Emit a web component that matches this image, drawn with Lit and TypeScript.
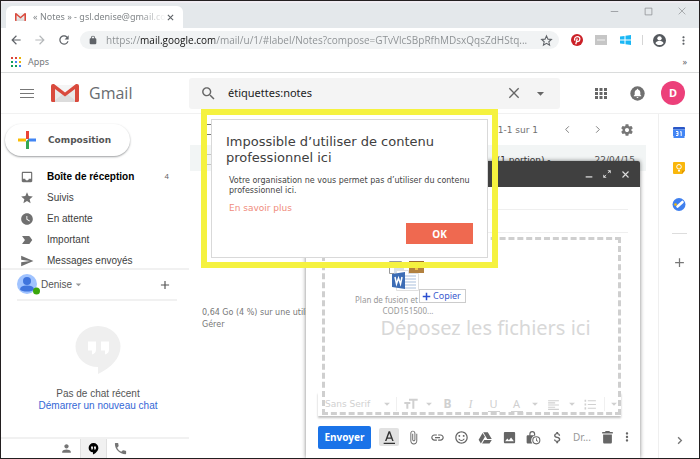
import { LitElement, html, css, svg } from "lit";
import { customElement } from "lit/decorators.js";

const icon = (body: unknown, size = 14, box = "0 0 24 24") =>
  html`<svg class="ic" width=${size} height=${size} viewBox=${box} fill="currentColor" aria-hidden="true">${body}</svg>`;
const p = (d: string, fill = "currentColor") => svg`<path d=${d} fill=${fill}></path>`;
const line = (d: string, w = 2) =>
  svg`<path d=${d} fill="none" stroke="currentColor" stroke-width=${w}></path>`;

const CARET = p("M7 10l5 5 5-5z");
const PLUS = p("M19 13h-6v6h-2v-6H5v-2h6V5h2v6h6v2z");
const DOTS = p("M12 8c1.1 0 2-.9 2-2s-.9-2-2-2-2 .9-2 2 .9 2 2 2zm0 2c-1.1 0-2 .9-2 2s.9 2 2 2 2-.9 2-2-.9-2-2-2zm0 6c-1.1 0-2 .9-2 2s.9 2 2 2 2-.9 2-2-.9-2-2-2z");
const PERSON = p("M12 12c2.21 0 4-1.79 4-4s-1.79-4-4-4-4 1.79-4 4 1.79 4 4 4zm0 2c-2.67 0-8 1.34-8 4v2h16v-2c0-2.66-5.33-4-8-4z");
const CLOSE = line("M5 5L19 19M19 5L5 19", 2);
const INBOX = p("M19 3H5c-1.1 0-2 .9-2 2v14c0 1.1.9 2 2 2h14c1.1 0 2-.9 2-2V5c0-1.1-.9-2-2-2zm0 12h-4c0 1.66-1.35 3-3 3s-3-1.34-3-3H5V5h14v10z");
const STAR = p("M12 17.27L18.18 21l-1.64-7.03L22 9.24l-7.19-.61L12 2 9.19 8.63 2 9.24l5.46 4.73L5.82 21z");
const CLOCK = p("M12 2C6.5 2 2 6.5 2 12s4.500 10 10 10 10-4.500 10-10S17.500 2 12 2zm4.200 14.200L11 13V7h1.500v5.200l4.500 2.700-.8 1.300z");
const LABEL = p("M3.500 19h11.500c.7 0 1.300-.3 1.700-.9L21 12l-4.300-6.100c-.4-.6-1-.9-1.700-.9H3.500l5 7z");
const SEND = p("M2 21l21-9L2 3v7l15 2-15 2z");

const gmailMark = (w: number, h: number) => html`
  <svg width=${w} height=${h} viewBox="0 0 28 18" preserveAspectRatio="none" aria-hidden="true">
    <path d="M2 1h24v17H2z" fill="#e9e9e9"></path>
    <path d="M2 18L14 8l12 10z" fill="#dcdcdc"></path>
    <path d="M3 1h22L14 10z" fill="#f5f5f5"></path>
    <path d="M0 2Q0 0 2 0h1l11 8.500L25 0h1q2 0 2 2v14.500q0 1.500-1.500 1.500H24V5L14 12.500 4 5v13H1.500Q0 18 0 16.500z" fill="#d94a3d"></path>
  </svg>`;

@customElement("browser-bar")
export class BrowserBar extends LitElement {
  static styles = css`
    :host { display: block; font-family: "Noto Sans", sans-serif; color: #5f6368; }
    button { border: 0; background: none; padding: 0; color: inherit; font: inherit; display: grid; place-items: center; flex: none; }
    svg { display: block; }
    .strip { display: flex; align-items: flex-end; height: 27px; background: #e4e8eb; border-top: 2px solid #efecf2; box-sizing: border-box; padding-left: 5px; }
    .tab { display: flex; align-items: center; width: 177px; height: 22px; background: #fff; border-radius: 6px 6px 0 0; box-sizing: border-box; padding: 0 8px 0 9px; }
    .name { flex: 1; margin-left: 7px; font-size: 9px; line-height: 16px; color: #808588; white-space: nowrap; overflow: hidden;
      mask-image: linear-gradient(90deg, #000 80%, transparent); }
    .controls { display: flex; margin-left: auto; align-self: flex-start; color: #8b8e91; }
    .controls button { width: 34px; height: 16px; }
    .bar { display: flex; align-items: center; height: 24px; background: #fff; padding: 0 4px 0 3px; }
    .slot { width: 24px; height: 24px; }
    .dim { color: #b5b8ba; }
    .pill { flex: 1; display: flex; align-items: center; gap: 8px; height: 18px; margin: 0 6px 0 4px; padding: 0 6px 0 8px; border-radius: 9px; background: #f1f3f4; min-width: 0; }
    .pill input { flex: 1; min-width: 0; border: 0; padding: 0; outline: 0; height: 18px; font: 10px/18px "Open Sans", sans-serif; color: transparent;
      background: linear-gradient(90deg, #8a8e91 34px, #111 34px, #111 109px, #8a8e91 109px); background-clip: text; -webkit-background-clip: text; }
    .sep { width: 1px; height: 10px; margin: 0 4px 0 5px; background: #d5d5d5; }
    .marks { display: flex; align-items: center; justify-content: space-between; height: 20px; padding: 0 12px 0 10px; border-bottom: 1px solid #dadcdc; background: #fff; font-size: 9px; line-height: 20px; }
    .marks a { display: flex; align-items: center; gap: 7px; color: #777b7e; text-decoration: none; }
  `;
  render() {
    const colors = ["#db4437", "#db4437", "#e8b20a", "#0f9d58", "#4285f4", "#e8b20a", "#0f9d58", "#0f9d58", "#4285f4"];
    return html`
      <div class="strip">
        <div class="tab">
          ${gmailMark(11, 8)}
          <span class="name">« Notes » - gsl.denise@gmail.com</span>
          <button aria-label="Fermer l'onglet">${icon(line("M5 5L19 19M19 5L5 19", 3), 9)}</button>
        </div>
        <div class="controls">
          <button aria-label="Réduire">${icon(line("M2 12H22", 2), 9)}</button>
          <button aria-label="Agrandir">${icon(line("M3 3H21V21H3z", 2), 9)}</button>
          <button aria-label="Fermer">${icon(line("M2 2L22 22M22 2L2 22", 2), 8)}</button>
        </div>
      </div>
      <div class="bar">
        <button class="slot" aria-label="Précédent">${icon(p("M20 11H7.800l5.600-5.600L12 4l-8 8 8 8 1.400-1.400L7.800 13H20z"))}</button>
        <button class="slot dim" aria-label="Suivant">${icon(p("M4 11h12.200l-5.600-5.600L12 4l8 8-8 8-1.400-1.400 5.600-5.600H4z"))}</button>
        <button class="slot" aria-label="Actualiser">${icon(p("M17.650 6.350C16.200 4.900 14.210 4 12 4c-4.420 0-8 3.580-8 8s3.580 8 8 8c3.730 0 6.840-2.550 7.730-6h-2.080c-.82 2.330-3.040 4-5.650 4-3.310 0-6-2.690-6-6s2.690-6 6-6c1.660 0 3.140.69 4.220 1.780L13 11h7V4z"))}</button>
        <div class="pill">
          ${icon(p("M18 8h-1V6.500a5 5 0 0 0-10 0V8H6c-1.100 0-2 .9-2 2v10c0 1.100.9 2 2 2h12c1.100 0 2-.9 2-2V10c0-1.100-.9-2-2-2zM9 8V6.500a3 3 0 0 1 6 0V8z"), 10)}
          <input aria-label="Adresse" .value=${"https://mail.google.com/mail/u/1/#label/Notes?compose=GTvVlcSBpRfhMDsxQqsZdHStq..."}>
          <button aria-label="Ajouter aux favoris">${icon(line("M12 3.500l2.700 6 6.300.6-4.700 4.200 1.400 6.400L12 17.300l-5.700 3.400 1.400-6.400L3 10.100l6.300-.6z", 2), 13)}</button>
        </div>
        <button class="slot" aria-label="Pinterest">
          <svg width="12" height="12" viewBox="0 0 24 24"><circle cx="12" cy="12" r="12" fill="#cb2027"></circle><path d="M8 13.500C5.500 9 9 5 12.500 5c4 0 6 3 5 6.500-1 4-5 4.500-6 2.500M12.500 9L9.500 20.500" fill="none" stroke="#fff" stroke-width="2.500"></path></svg>
        </button>
        <button class="slot" aria-label="Extension">
          <svg width="12" height="10" viewBox="0 0 12 10"><path d="M0 0h12v10H0z" fill="#c6c6c6"></path><path d="M2 5h8" stroke="#dcdcdc" stroke-width="2"></path></svg>
        </button>
        <button class="slot" aria-label="Windows">
          <svg width="11" height="10" viewBox="0 0 11 10"><path d="M0 1.500L4.500 1v3.600H0zM5.500.8L11 0v4.600H5.500zM0 5.500h4.500V9L0 8.500zM5.500 5.500H11V10l-5.500-.8z" fill="#1ab7f5"></path></svg>
        </button>
        <span class="sep"></span>
        <button class="slot" aria-label="Profil">
          <svg width="13" height="13" viewBox="0 0 24 24"><circle cx="12" cy="12" r="12" fill="#55595e"></circle><circle cx="12" cy="8" r="4" fill="#fff"></circle><path d="M4.500 17C5 14 9 13 12 13s7 1 7.500 4c-2 2.500-4.500 3.500-7.500 3.500S6.500 19.500 4.500 17z" fill="#fff"></path></svg>
        </button>
        <button class="slot" aria-label="Menu">${icon(DOTS, 13)}</button>
      </div>
      <div class="marks">
        <a href="#apps">
          <svg width="10" height="10" viewBox="0 0 10 10">
            ${colors.map((c, i) => svg`<rect x=${(i % 3) * 4} y=${Math.floor(i / 3) * 4} width="2" height="2" fill=${c}></rect>`)}
          </svg>
          Apps
        </a>
        <span>»</span>
      </div>
    `;
  }
}

@customElement("mail-header")
export class MailHeader extends LitElement {
  static styles = css`
    :host { display: flex; align-items: center; height: 40px; border-bottom: 1px solid #f1f1f1; background: #fff; color: #666; font-family: "Noto Sans", sans-serif; }
    button { border: 0; background: none; padding: 0; color: inherit; display: grid; place-items: center; flex: none; height: 30px; }
    svg { display: block; }
    .brand { display: flex; align-items: center; width: 188px; flex: none; box-sizing: border-box; padding-left: 14px; }
    .menu { width: 24px; margin-right: 12px; }
    .word { margin-left: 10px; font: 16px/24px "Open Sans", sans-serif; color: #686c70; }
    .search { flex: 1; display: flex; align-items: center; height: 31px; border-radius: 3px; background: #f4f4f4; min-width: 0; padding-right: 7px; }
    .search input { flex: 1; min-width: 0; border: 0; outline: 0; padding: 0; background: none; color: #222; font: 11px/20px "Noto Sans", sans-serif; }
    .glass { width: 39px; }
    .slim { width: 26px; }
    .tools { display: flex; align-items: center; width: 139px; flex: none; }
    .apps { width: 36px; margin-left: 23px; }
    .bell { width: 36px; }
    .me { width: 24px; height: 24px; margin-left: 6px; border-radius: 50%; background: #ec407a; color: #fff; font: bold 11px/24px "Noto Sans", sans-serif; }
  `;
  render() {
    return html`
      <div class="brand">
        <button class="menu" aria-label="Menu principal"><svg width="14" height="9" viewBox="0 0 14 9"><path d="M0 .5h14M0 4.500h14M0 8.500h14" stroke="#777" stroke-width="1"></path></svg></button>
        ${gmailMark(28, 18)}
        <span class="word">Gmail</span>
      </div>
      <div class="search">
        <button class="glass" aria-label="Rechercher">${icon(p("M15.500 14h-.79l-.28-.27C15.410 12.590 16 11.110 16 9.500 16 5.910 13.090 3 9.500 3S3 5.910 3 9.500 5.910 16 9.500 16c1.610 0 3.090-.59 4.230-1.570l.27.28v.79l5 4.990L20.490 19l-4.990-5zm-6 0C7.010 14 5 11.990 5 9.500S7.010 5 9.500 5 14 7.010 14 9.500 11.990 14 9.500 14z"), 17)}</button>
        <input aria-label="Rechercher dans les messages" .value=${"étiquettes:notes"}>
        <button class="slim" aria-label="Effacer">${icon(CLOSE, 16)}</button>
        <button class="slim" aria-label="Options de recherche">${icon(CARET, 17)}</button>
      </div>
      <div class="tools">
        <button class="apps" aria-label="Applications">
          <svg width="12" height="11" viewBox="0 0 12 11">
            ${[0, 1, 2, 3, 4, 5, 6, 7, 8].map((i) => svg`<rect x=${(i % 3) * 4.5} y=${Math.floor(i / 3) * 4} width="3" height="3" fill="#666"></rect>`)}
          </svg>
        </button>
        <button class="bell" aria-label="Notifications">
          <svg width="15" height="15" viewBox="0 0 24 24"><circle cx="12" cy="12" r="11.500" fill="#707070"></circle><path d="M12 4.500c.8 0 1.200.6 1.200 1.300 2.200.6 3.300 2.400 3.300 4.700v3.500l1.500 1.500v1H6v-1L7.500 14v-3.500c0-2.300 1.100-4.100 3.300-4.700 0-.7.400-1.300 1.200-1.300zM10.500 17.500h3c0 .9-.6 1.500-1.500 1.500s-1.500-.6-1.500-1.500z" fill="#fff"></path></svg>
        </button>
        <button class="me" aria-label="Compte">D</button>
      </div>
    `;
  }
}

@customElement("mail-sidebar")
export class MailSidebar extends LitElement {
  static styles = css`
    :host { display: flex; flex-direction: column; min-height: 0; background: #fff; color: #555; font: 10px/21px "Liberation Sans", Arial, sans-serif; }
    button { border: 0; background: none; padding: 0; color: inherit; font: inherit; }
    a { text-decoration: none; color: inherit; }
    svg { display: block; flex: none; }
    .compose { display: flex; align-items: center; gap: 12px; width: 125px; height: 32px; margin: 10px 0 10px 4px; padding: 0 0 0 13px; border-radius: 16px; background: #fff; box-shadow: 0 1px 2px rgba(60, 64, 67, 0.5); font: bold 9px/16px "DejaVu Sans", sans-serif; flex: none; }
    .item { display: flex; align-items: center; gap: 13px; height: 21px; padding: 0 20px 0 19px; font-size: 10px; color: #404040; }
    .item svg { color: #707070; }
    .item.on { color: #000; font-weight: bold; }
    .count { margin-left: auto; font-weight: normal; font-size: 8px; color: #666; }
    nav { flex: none; height: 102px; overflow: hidden; }
    .who { display: flex; align-items: center; height: 29px; margin: 0 12px 0 16px; border-bottom: 2px solid #f1f1f1; font-size: 10px; }
    .rule { border-top: 2px solid #f1f1f1; }
    .who span { margin-left: 1px; }
    .more { margin-left: auto; display: grid; place-items: center; width: 24px; height: 24px; }
    .chat { flex: 1; display: flex; flex-direction: column; align-items: center; padding-top: 25px; font-size: 10px; line-height: 12px; margin-right: -6px; min-height: 0; }
    .chat svg { margin-bottom: 14px; }
    .chat a { color: #3367d6; }
    .tabs { display: flex; height: 19px; padding-left: 52px; border-top: 2px solid #f1f1f1; color: #757575; }
    .tabs button { display: grid; place-items: center; width: 27px; }
    .tabs .on { background: #f1f1f1; color: #000; box-shadow: inset 1px 0 #e0e0e0, inset -1px 0 #e0e0e0; }
  `;
  render() {
    const rows: [string, unknown][] = [["Suivis", STAR], ["En attente", CLOCK], ["Important", LABEL], ["Messages envoyés", SEND]];
    return html`
      <button class="compose">
        <svg width="18" height="18" viewBox="0 0 18 18"><path d="M8 0h3v8H8z" fill="#ea4335"></path><path d="M0 7.500h8v3H0z" fill="#fbbc04"></path><path d="M11 7.500h7v3H8z" fill="#4285f4"></path><path d="M8 10.500L11 8v10H8z" fill="#34a853"></path></svg>
        Composition
      </button>
      <nav>
        <a class="item on" href="#inbox">${icon(INBOX)}Boîte de réception<span class="count">4</span></a>
        ${rows.map(([t, g]) => html`<a class="item" href="#label">${icon(g)}${t}</a>`)}
      </nav>
      <div class="rule"></div>
      <div class="who">
        <svg width="23" height="21" viewBox="0 0 23 21"><circle cx="10" cy="10" r="10" fill="#a0c3ff"></circle><circle cx="10" cy="7" r="4" fill="#3f74dd"></circle><path d="M3 15.500q0-4 7-4t7 4q-2 2-7 2t-7-2z" fill="#3f74dd"></path><circle cx="19.500" cy="17" r="3.500" fill="#3aa70c"></circle></svg>
        <span>Denise</span>${icon(p("M7 10l5 5 5-5z", "#999"), 13)}
        <button class="more" aria-label="Nouvelle conversation">${icon(PLUS, 14)}</button>
      </div>
      <div class="chat">
        <svg width="46" height="48" viewBox="0 0 46 48"><path d="M23 0a22.500 20.500 0 1 0 0 41v7C36 42 45.500 32 45.500 20.500A22.500 20.500 0 0 0 23 0z" fill="#efefef"></path><path d="M13 15.500h8v8q0 4-4 5v-4h-4zM26 15.500h8v8q0 4-4 5v-4h-4z" fill="#fff"></path></svg>
        <span>Pas de chat récent</span>
        <a href="#chat">Démarrer un nouveau chat</a>
      </div>
      <div class="tabs">
        <button aria-label="Contacts">${icon(PERSON, 13)}</button>
        <button class="on" aria-label="Hangouts">${icon(p("M12 2a9 9 0 0 0-9 9c0 4.700 3.500 8 8 8v4c5-2 10-7 10-12a9 9 0 0 0-9-9zM7.500 8.500h3.500v3.500l-1.500 2.500H8.300V12h-.8zM13 8.500h3.500v3.500L15 14.500h-1.200V12H13z"), 13)}</button>
        <button aria-label="Téléphone">${icon(p("M6.620 10.790c1.440 2.830 3.760 5.140 6.590 6.590l2.200-2.200c.27-.27.67-.36 1.020-.24 1.120.37 2.330.57 3.570.57.55 0 1 .45 1 1V20c0 .55-.45 1-1 1-9.390 0-17-7.610-17-17 0-.55.45-1 1-1h3.500c.55 0 1 .45 1 1 0 1.250.2 2.450.57 3.570.11.35.03.74-.25 1.020z"), 15)}</button>
      </div>
    `;
  }
}

@customElement("compose-window")
export class ComposeWindow extends LitElement {
  static styles = css`
    :host { display: flex; flex-direction: column; background: #fff; border-radius: 2px 2px 0 0; box-shadow: 0 0 4px rgba(0, 0, 0, 0.5); font-family: "Noto Sans", sans-serif; color: #666; }
    button { border: 0; background: none; padding: 0; color: inherit; display: grid; place-items: center; flex: none; }
    svg { display: block; }
    .title { display: flex; align-items: center; justify-content: flex-end; height: 26px; padding-right: 6px; background: #404040; color: #ddd; border-radius: 2px 2px 0 0; flex: none; }
    .title button { width: 18px; height: 20px; }
    .field { height: 22px; margin: 0 12px; border-bottom: 1px solid #efefef; flex: none; }
    .editor { position: relative; flex: 1; display: flex; flex-direction: column; min-height: 0; }
    .page { flex: 1; }
    .format { display: flex; align-items: center; height: 24px; margin: 0 19px 0 12px; padding-left: 7px; box-shadow: 0 2px 2px rgba(0, 0, 0, 0.25); background: #fff; color: #d0d0d0; font-size: 10px; }
    .format select { appearance: none; border: 0; background: none; color: inherit; font: 9px/16px "DejaVu Sans", sans-serif; width: 55px; padding: 0; }
    .format button { width: 23px; height: 20px; }
    .format .thin { width: 10px; margin-right: 4px; }
    .format i.bar { width: 1px; height: 14px; margin: 0 2px; background: #f0f0f0; }
    .format .b { font: bold 12px/16px "Noto Sans", sans-serif; }
    .format .i { font: italic 12px/16px "Liberation Serif", serif; }
    .format .u { font: 11px/14px "Noto Sans", sans-serif; }
    .format .u span { border-bottom: 1px solid; height: 14px; width: 12px; }
    .drop { position: absolute; inset: 4px 19px 1px 16px; border: 3px dashed #cfcfcf; display: grid; place-items: center; padding: 4px 0 0 28px; font: 20px/24px "Noto Sans", sans-serif; color: #d8d8d8; white-space: nowrap; }
    .foot { display: flex; align-items: center; height: 42px; padding: 0 5px 0 12px; flex: none; }
    .foot button { width: 24px; height: 20px; }
    .foot .send { width: 53px; height: 23px; margin-right: 8px; border-radius: 2px; background: #1a73e8; color: #fff; font: bold 10px/16px "Noto Sans", sans-serif; }
    .foot .on { width: 20px; height: 18px; margin-right: 2px; border-radius: 2px; background: #e2e2e2; color: #333; }
    .draft { width: 26px; text-align: center; font-size: 10px; line-height: 16px; color: #999; }
    .foot .last { width: 16px; }
    .ghost { position: absolute; left: 49px; top: 28px; width: 106px; display: flex; flex-direction: column; align-items: center; font: 8px/11px "Noto Sans", sans-serif; color: #999; }
    .ghost svg { margin: 0 12px 3px 0; }
    .ghost .first { align-self: flex-start; }
    .tip { position: absolute; left: 113px; top: 56px; display: flex; align-items: center; gap: 2px; height: 12px; padding: 0 4px 0 2px; border: 1px solid #ccc; background: #fff; color: #3b5bcf; font-size: 9px; line-height: 12px; }
    .tip svg { color: #2b4fd0; }
  `;
  render() {
    const foot: [string, unknown][] = [
      ["Joindre des fichiers", p("M16.500 6v11.500c0 2.210-1.790 4-4 4s-4-1.790-4-4V5c0-1.380 1.120-2.500 2.500-2.500s2.500 1.120 2.500 2.500v10.500c0 .55-.45 1-1 1s-1-.45-1-1V6H10v9.500c0 1.380 1.120 2.500 2.500 2.500s2.500-1.120 2.500-2.500V5c0-2.210-1.790-4-4-4S7 2.790 7 5v12.500c0 3.040 2.460 5.500 5.500 5.500s5.500-2.460 5.500-5.500V6z")],
      ["Insérer un lien", p("M3.900 12c0-1.710 1.390-3.100 3.100-3.100h4V7H7c-2.760 0-5 2.240-5 5s2.240 5 5 5h4v-1.900H7c-1.710 0-3.100-1.390-3.100-3.100zM8 13h8v-2H8zm9-6h-4v1.900h4c1.710 0 3.100 1.390 3.100 3.100s-1.390 3.100-3.100 3.100h-4V17h4c2.760 0 5-2.240 5-5s-2.240-5-5-5z")],
      ["Insérer un emoji", p("M11.990 2C6.470 2 2 6.480 2 12s4.470 10 9.990 10C17.520 22 22 17.520 22 12S17.520 2 11.990 2zM12 20c-4.420 0-8-3.580-8-8s3.580-8 8-8 8 3.580 8 8-3.580 8-8 8zm3.500-9c.83 0 1.500-.67 1.500-1.500S16.330 8 15.500 8 14 8.670 14 9.500s.67 1.500 1.500 1.500zm-7 0c.83 0 1.500-.67 1.500-1.500S9.330 8 8.500 8 7 8.670 7 9.500 7.670 11 8.500 11zm3.500 6.500c2.330 0 4.310-1.460 5.110-3.500h-1.700a4 4 0 0 1-6.820 0h-1.700c.8 2.040 2.780 3.500 5.110 3.500z")],
      ["Insérer depuis Drive", p("M8.300 3.500h7.400l6.300 11h-7.300zM7.300 4.800L1 15.500 4.600 21.500l6.500-10.700zM10 16h12l-3.600 5.500H6.500z")],
      ["Insérer une photo", p("M21 19V5c0-1.100-.9-2-2-2H5c-1.100 0-2 .9-2 2v14c0 1.100.9 2 2 2h14c1.100 0 2-.9 2-2zM8.500 13.500l2.500 3 3.500-4.500 4.500 6H5z")],
      ["Mode confidentiel", p("M15.500 8.500h-.8V6.200a4.700 4.700 0 0 0-9.400 0v2.300H3c-1.100 0-2 .9-2 2v9c0 1.100.9 2 2 2h7a8 8 0 0 1 5.500-13zM7.200 8.500V6.200a2.800 2.800 0 0 1 5.600 0v2.300zM16.500 10a6.500 6.500 0 1 0 0 13 6.500 6.500 0 0 0 0-13zm0 11.300a4.800 4.800 0 1 1 0-9.600 4.800 4.800 0 0 1 0 9.600zM16 13h1.400v3.200l2.200 1.400-.7 1.100L16 17z")],
      ["Insérer un paiement", p("M11.800 10.900c-2.270-.59-3-1.200-3-2.150 0-1.090 1.010-1.850 2.700-1.850 1.780 0 2.440.85 2.500 2.100h2.210c-.07-1.720-1.120-3.300-3.210-3.810V3h-3v2.160c-1.940.42-3.500 1.680-3.500 3.610 0 2.310 1.910 3.460 4.700 4.130 2.500.6 3 1.480 3 2.410 0 .69-.49 1.790-2.700 1.790-2.060 0-2.870-.92-2.980-2.100h-2.200c.12 2.190 1.760 3.420 3.680 3.830V21h3v-2.150c1.950-.37 3.500-1.500 3.500-3.550 0-2.840-2.430-3.810-4.700-4.400z")],
    ];
    return html`
      <div class="title">
        <button aria-label="Réduire">${icon(line("M4 19H20", 3), 10)}</button>
        <button aria-label="Plein écran">${icon(svg`${line("M5 19L10 14M14 10L19 5", 2)}${p("M13 3h8v8zM3 13v8h8z")}`, 10)}</button>
        <button aria-label="Fermer">${icon(line("M4 4L20 20M20 4L4 20", 3), 9)}</button>
      </div>
      <div class="field"></div>
      <div class="field"></div>
      <div class="editor">
        <div class="page"></div>
        <div class="format">
          <select aria-label="Police"><option>Sans Serif</option></select>
          <button class="thin" aria-label="Liste des polices">${icon(CARET)}</button>
          <i class="bar"></i>
          <button aria-label="Taille">${icon(p("M9 4v3h5v12h3V7h5V4zM2 12h3v7h3v-7h3V9H2z"), 16)}</button>
          <button class="thin" aria-label="Liste des tailles">${icon(CARET)}</button>
          <button class="b" aria-label="Gras">B</button>
          <button class="i" aria-label="Italique">I</button>
          <button class="u" aria-label="Souligné"><span>U</span></button>
          <button class="u" aria-label="Couleur du texte"><span>A</span></button>
          <button class="thin" aria-label="Liste des couleurs">${icon(CARET)}</button>
          <button aria-label="Alignement">${icon(p("M2 4h20v2H2zM2 8h13v2H2zM2 12h20v2H2zM2 16h13v2H2zM2 20h20v2H2z"), 13)}</button>
          <button class="thin" aria-label="Liste des alignements">${icon(CARET)}</button>
          <button aria-label="Liste numérotée">${icon(p("M7 4h15v2H7zM7 11h15v2H7zM7 18h15v2H7zM1 3h3v4H1zM1 10h3v4H1zM1 17h3v4H1z"), 13)}</button>
          <i class="bar"></i>
          <button class="thin" aria-label="Plus d'options">${icon(CARET)}</button>
        </div>
        <div class="drop">Déposez les fichiers ici</div>
        <div class="ghost">
          <svg width="44" height="30" viewBox="0 0 44 30">
            <path d="M9.500.5h12v12h-12z" fill="#fff" stroke="#9a9a9a"></path><path d="M14 2h10v12H14z" fill="#d8dfe8"></path>
            <path d="M29 0h15v12H29z" fill="#b2813f"></path><path d="M29 0h15v7H29z" fill="#9c6c31"></path><path d="M35 6h3v3h-3z" fill="#f1c34a"></path>
            <path d="M16.500 9.500h12v3h10v17h-22z" fill="#fff" stroke="#e0e0e0"></path><path d="M25 15h11M25 18h11M25 21h11M25 24h11M25 27h11" stroke="#a9bfdc"></path>
            <path d="M12 13l13-2v17l-13-2z" fill="#3d6db5"></path><path d="M15 16l1.500 7 2-6 2 6 1.500-7" fill="none" stroke="#fff" stroke-width="1.500"></path>
          </svg>
          <span class="first">Plan de fusion et</span><span>COD151500...</span>
        </div>
        <div class="tip">${icon(line("M12 2V22M2 12H22", 4), 9)}Copier</div>
      </div>
      <div class="foot">
        <button class="send">Envoyer</button>
        <button class="on" aria-label="Options de mise en forme">${icon(p("M4 20.500h17v2H4zM6 18h2.200l1.300-3.500h6L16.800 18H19L13.600 3.500h-2.200zM10.200 12.600L12.500 6.300l2.300 6.300z"), 16)}</button>
        ${foot.map(([t, g]) => html`<button aria-label=${t}>${icon(g, 15)}</button>`)}
        <span class="draft">Dr...</span>
        <button aria-label="Supprimer le brouillon">${icon(p("M5 7v12.500c0 1.100.9 2 2 2h10c1.100 0 2-.9 2-2V7zM20.500 3H16l-1-1.500H9L8 3H3.500v2.500h17z"), 15)}</button>
        <button class="last" aria-label="Autres options">${icon(DOTS, 14)}</button>
      </div>
    `;
  }
}

@customElement("block-dialog")
export class BlockDialog extends LitElement {
  static styles = css`
    :host { display: block; border: 6px solid #f5f23f; padding: 4px; box-sizing: border-box; font-family: "DejaVu Sans", sans-serif; }
    .box { display: flex; flex-direction: column; align-items: flex-start; height: 100%; box-sizing: border-box; border: 1px solid #d9d9d9; background: #fff; padding: 14px 14px 13px; }
    h1 { margin: 0 0 10px; font: 13px/16px "DejaVu Sans", sans-serif; color: #404040; white-space: nowrap; }
    p { margin: 0 0 7px 3px; font-size: 8px; line-height: 10px; color: #444; white-space: nowrap; }
    a { margin-left: 3px; font-size: 9px; line-height: 11px; color: #f08c7c; text-decoration: none; }
    button { align-self: flex-end; margin-top: auto; width: 67px; height: 21px; border: 0; padding: 0; background: #ef6950; color: #fff; font: bold 10px/20px "Noto Sans", sans-serif; }
  `;
  render() {
    return html`
      <div class="box" role="dialog" aria-labelledby="t">
        <h1 id="t">Impossible d’utiliser de contenu<br>professionnel ici</h1>
        <p>Votre organisation ne vous permet pas d’utiliser du contenu<br>professionnel ici.</p>
        <a href="#aide">En savoir plus</a>
        <button>OK</button>
      </div>
    `;
  }
}

@customElement("app-root")
export class AppRoot extends LitElement {
  static styles = css`
    :host { display: flex; flex-direction: column; position: relative; height: 100vh; box-sizing: border-box; border: 1px solid #231f20; background: #fff; overflow: hidden; font-family: "Noto Sans", sans-serif; }
    button { border: 0; background: none; padding: 0; color: #777; display: grid; place-items: center; }
    svg { display: block; }
    browser-bar, mail-header { flex: none; }
    .body { position: relative; flex: 1; display: grid; grid-template-columns: 188px 1fr 41px; min-height: 0; }
    .list { display: flex; flex-direction: column; min-width: 0; }
    .head { display: flex; align-items: center; height: 31px; padding: 0 16px 0 13px; font: 9px/16px "DejaVu Sans", sans-serif; color: #707070; }
    .head input, .row input { appearance: none; width: 11px; height: 11px; margin: 0; border: 1px solid #777; }
    .pages { margin-left: auto; margin-right: 14px; }
    .head button { width: 30px; }
    .row { display: flex; align-items: center; height: 26px; margin: 0 12px 0 1px; padding: 3px 11px 0 12px; box-sizing: border-box; background: #f2f5f5; font: 9px/16px "DejaVu Sans", sans-serif; color: #555; }
    .row input { border-color: #c4c4c4; }
    .row b { margin-left: auto; font-weight: normal; margin-right: 44px; color: #333; }
    .quota { margin: 136px 0 0 13px; font: 8px/12px "DejaVu Sans", sans-serif; color: #777; }
    .quota a { color: inherit; text-decoration: none; display: block; }
    .apps { display: flex; flex-direction: column; align-items: center; border-left: 1px solid #efefef; }
    .apps button { width: 36px; height: 36px; }
    .apps hr { width: 15px; border: 0; border-top: 1px solid #ddd; margin: 11px 0 10px; }
    .apps .end { margin-top: auto; }
    compose-window { position: absolute; top: 47px; bottom: 0; right: 59px; width: 334px; }
    block-dialog { position: absolute; left: 200px; top: 108px; width: 297px; height: 159px; }
  `;
  render() {
    return html`
      <browser-bar></browser-bar>
      <mail-header></mail-header>
      <div class="body">
        <mail-sidebar></mail-sidebar>
        <main class="list">
          <div class="head">
            <input type="checkbox" aria-label="Tout sélectionner">
            <span class="pages">1-1 sur 1</span>
            <button aria-label="Plus récents">${icon(line("M15 5L8 12L15 19", 2), 11)}</button>
            <button aria-label="Plus anciens">${icon(line("M9 5L16 12L9 19", 2), 11)}</button>
            <button aria-label="Paramètres">${icon(p("M19.430 12.980c.04-.32.07-.64.07-.98s-.03-.66-.07-.98l2.110-1.650c.19-.15.24-.42.12-.64l-2-3.460c-.12-.22-.39-.3-.61-.22l-2.490 1c-.52-.4-1.080-.73-1.690-.98l-.38-2.650C14.460 2.180 14.250 2 14 2h-4c-.25 0-.46.18-.49.42l-.38 2.650c-.61.25-1.170.59-1.690.98l-2.490-1c-.23-.09-.49 0-.61.22l-2 3.460c-.13.22-.07.49.12.64l2.110 1.650c-.04.32-.07.65-.07.98s.03.66.07.98l-2.110 1.650c-.19.15-.24.42-.12.64l2 3.460c.12.22.39.3.61.22l2.490-1c.52.4 1.080.73 1.690.98l.38 2.650c.03.24.24.42.49.42h4c.25 0 .46-.18.49-.42l.38-2.650c.61-.25 1.170-.59 1.690-.98l2.490 1c.23.09.49 0 .61-.22l2-3.460c.12-.22.07-.49-.12-.64zM12 15.500c-1.930 0-3.500-1.570-3.500-3.500s1.570-3.500 3.500-3.500 3.500 1.570 3.500 3.500-1.570 3.500-3.500 3.500z"), 14)}</button>
          </div>
          <div class="row">
            <input type="checkbox" aria-label="Sélectionner le message">
            <b>(1 portion) -</b><span>22/04/15</span>
          </div>
          <div class="quota">0,64 Go (4 %) sur une utilisation<a href="#gerer">Gérer</a></div>
        </main>
        <aside class="apps">
          <button aria-label="Agenda"><svg width="12" height="11" viewBox="0 0 12 11"><path d="M0 1q0-1 1-1h10q1 0 1 1v1.500H0z" fill="#2a56c6"></path><path d="M0 2.500h12V9h-.5v2H.5V9H0z" fill="#4285f4"></path><path d="M3 4.500h2v4H3M3.500 6.500H5M7 5l1.200-.5v4.500" fill="none" stroke="#fff"></path></svg></button>
          <button aria-label="Keep"><svg width="12" height="12" viewBox="0 0 12 12"><path d="M0 1q0-1 1-1h10q1 0 1 1v7.500L9 12H1q-1 0-1-1z" fill="#f9b70c"></path><path d="M12 8.500H9V12z" fill="#e09600"></path><circle cx="6" cy="4.800" r="2.300" fill="none" stroke="#fff"></circle><path d="M5 8h2v1.500H5z" fill="#fff"></path></svg></button>
          <button aria-label="Tasks"><svg width="14" height="13" viewBox="0 0 14 13"><circle cx="7" cy="6.500" r="6.500" fill="#4080ee"></circle><path d="M5.500 8.500L10.500 4" stroke="#fff" stroke-width="2.600" stroke-linecap="round"></path><circle cx="3.500" cy="6.500" r="1.300" fill="#fbbc04"></circle></svg></button>
          <hr>
          <button aria-label="Modules complémentaires">${icon(PLUS, 15)}</button>
          <button class="end" aria-label="Masquer le panneau">${icon(line("M9 5L16 12L9 19", 3), 11)}</button>
        </aside>
        <compose-window></compose-window>
      </div>
      <block-dialog></block-dialog>
    `;
  }
}
